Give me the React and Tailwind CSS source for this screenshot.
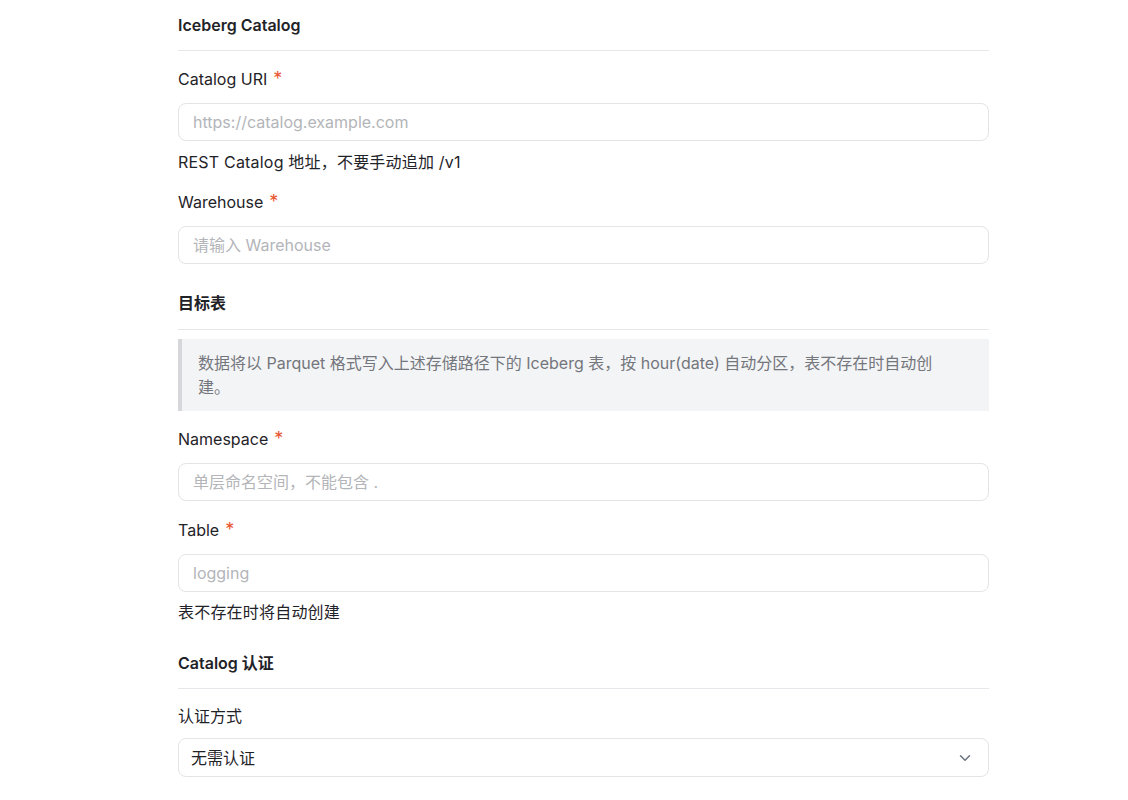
import React from 'react';
import { ChevronDown } from 'lucide-react';

const font = { fontFamily: 'Inter, "Noto Sans CJK SC", sans-serif' };

function SectionTitle({ children, className = '' }) {
  return (
    <div className={`border-b border-[#e5e7eb] pb-[13px] ${className}`}>
      <h3 className="text-[16px] leading-[24px] font-semibold text-[#1f2328]">{children}</h3>
    </div>
  );
}

function Label({ children, required }) {
  return (
    <label className="block text-[16px] leading-[24px] text-[#1f2328]">
      {children}
      {required && <span className="ml-[6px] text-[18px] text-[#e8552e]">*</span>}
    </label>
  );
}

function TextInput({ placeholder }) {
  return (
    <input
      placeholder={placeholder}
      style={font}
      className="mt-[12px] block h-[38px] w-full rounded-[8px] border border-[#e3e4e6] bg-white px-[14px] text-[16px] text-[#1f2328] placeholder:text-[#b3b5b9] outline-none"
    />
  );
}

function Help({ children }) {
  return <p className="text-[16px] leading-[24px] tracking-[0.2px] text-[#1f2328]">{children}</p>;
}

export default function App() {
  return (
    <div className="min-h-screen bg-white" style={font}>
      <div className="w-[811px] pt-[13px] ml-[178px]">
        {/* Iceberg Catalog */}
        <SectionTitle>Iceberg Catalog</SectionTitle>

        <div className="mt-[16px]">
          <Label required>Catalog URI</Label>
          <TextInput placeholder="https://catalog.example.com" />
          <div className="mt-[9px]">
            <Help>REST Catalog 地址，不要手动追加 /v1</Help>
          </div>
        </div>

        <div className="mt-[16px]">
          <Label required>Warehouse</Label>
          <TextInput placeholder="请输入 Warehouse" />
        </div>

        {/* 目标表 */}
        <SectionTitle className="mt-[27px] pb-[14px]">目标表</SectionTitle>

        <div className="mt-[9px] border-l-4 border-[#d5d7db] bg-[#f3f4f6] py-[12px] pl-[16px] pr-[56px]">
          <p className="text-[16px] leading-[24px] text-[#73767c]">
            数据将以 Parquet 格式写入上述存储路径下的 Iceberg 表，按 hour(date) 自动分区，表不存在时自动创建。
          </p>
        </div>

        <div className="mt-[16px]">
          <Label required>Namespace</Label>
          <TextInput placeholder="单层命名空间，不能包含 ." />
        </div>

        <div className="mt-[17px]">
          <Label required>Table</Label>
          <TextInput placeholder="logging" />
          <div className="mt-[8px]">
            <Help>表不存在时将自动创建</Help>
          </div>
        </div>

        {/* Catalog 认证 */}
        <SectionTitle className="mt-[27px]">Catalog 认证</SectionTitle>

        <div className="mt-[15px]">
          <Label>认证方式</Label>
          <div className="mt-[10px] flex h-[39px] w-full items-center justify-between rounded-[8px] border border-[#e3e4e6] bg-white pl-[12px] pr-[14px]">
            <span className="text-[16px] text-[#1f2328]">无需认证</span>
            <ChevronDown className="h-[18px] w-[18px] text-[#6b7280]" strokeWidth={2} />
          </div>
        </div>
      </div>
    </div>
  );
}
